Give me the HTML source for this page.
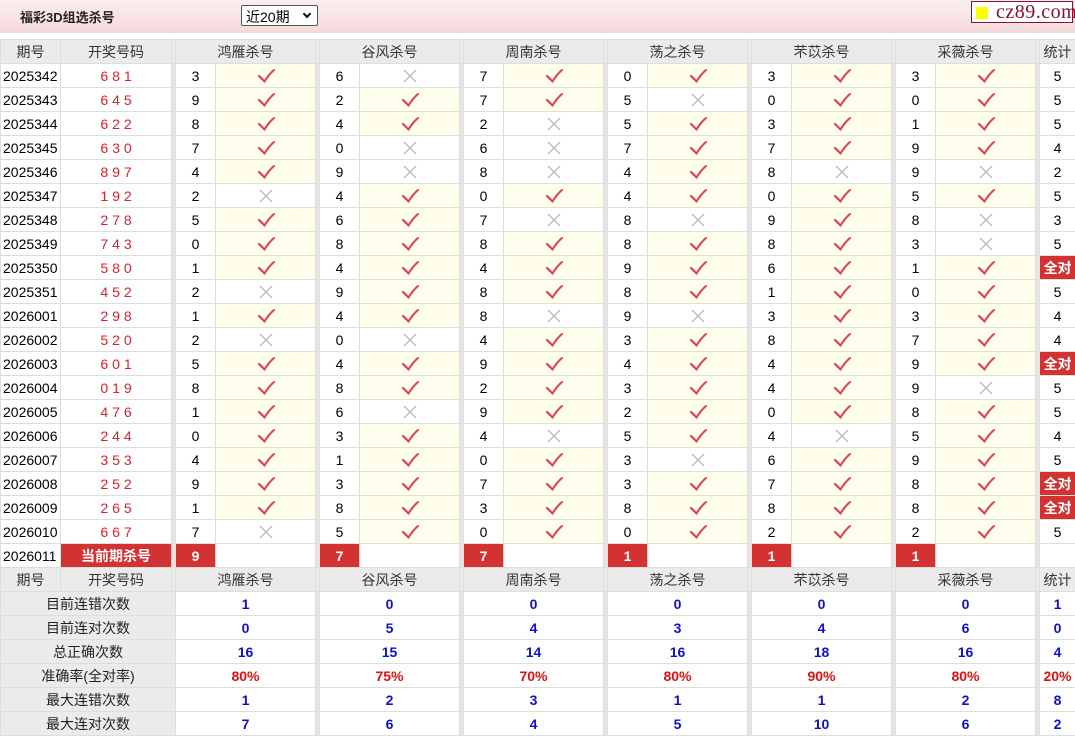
<!DOCTYPE html>
<html><head><meta charset="utf-8"><style>
*{margin:0;padding:0;box-sizing:border-box}
body{width:1075px;height:735px;overflow:hidden;background:#fff;font-family:"Liberation Sans","Noto Sans CJK SC",sans-serif;font-size:14px;color:#000}
.top{position:absolute;left:0;top:0;width:1075px;height:33px;background:linear-gradient(#fbeff0,#f5d9db)}
.title{position:absolute;left:20px;top:7px;font-weight:bold;font-size:13px;color:#222}
.sel{position:absolute;left:241px;top:5px;width:77px;height:21px;border:1px solid #555;border-radius:2px;background:#fff;font-size:14px;padding:1px 0 0 4px}
.sel b{position:absolute;right:7px;top:5px;width:6px;height:6px;border-right:2px solid #000;border-bottom:2px solid #000;transform:rotate(45deg)}
.logo{position:absolute;left:971px;top:1px;width:102px;height:22px;border:1px solid #8b1030;background:#fff;font-family:"Liberation Serif",serif;font-size:20px;color:#8b1030;line-height:20px;padding-left:24px;letter-spacing:0.5px}
.logo i{position:absolute;left:4px;top:5px;width:12px;height:12px;background:#ff0}
table{position:absolute;left:0;top:39px;border-collapse:collapse;table-layout:fixed;width:1075px}
tr{height:24px}
td{border:1px solid #ddd;height:24px;text-align:center;padding:0;white-space:nowrap;overflow:hidden;line-height:20px}
tr.h td{background:#ebebeb;color:#333}
td.s{background:#e6e6e6;border-color:#e0e0e0}
td.p{text-align:left;padding-left:2px}
td.d{color:#e02030;letter-spacing:4px;padding-left:4px}
td.y{background:#fffdec}
td.r{background:#d23232;color:#fff;font-weight:bold}
td.l{background:#ebebeb;color:#222}
td.v{color:#1010cc;font-weight:bold}
td.w{color:#e01010;font-weight:bold}
svg.k{width:20px;height:16px;display:block;margin:0 auto}
</style></head><body>
<svg width="0" height="0" style="position:absolute"><defs>
<g id="c"><path d="M3 8 L8.5 13.5 Q13 6 18 2" fill="none" stroke="#e8384f" stroke-width="2" stroke-linecap="round" stroke-linejoin="round"/></g>
<g id="x"><path d="M4 2 L16 14 M16 2 L4 14" fill="none" stroke="#bbb" stroke-width="1.4"/></g>
</defs></svg>
<div class="top"><div class="title">福彩3D组选杀号</div><div class="sel">近20期<b></b></div><div class="logo"><i></i>cz89.com</div></div>
<table>
<colgroup><col style="width:60px"><col style="width:111px"><col style="width:4px"><col style="width:40px"><col style="width:100px"><col style="width:4px"><col style="width:40px"><col style="width:100px"><col style="width:4px"><col style="width:40px"><col style="width:100px"><col style="width:4px"><col style="width:40px"><col style="width:100px"><col style="width:4px"><col style="width:40px"><col style="width:100px"><col style="width:4px"><col style="width:40px"><col style="width:100px"><col style="width:4px"><col style="width:36px"></colgroup>
<tr class="h"><td>期号</td><td>开奖号码</td><td class="s"></td><td colspan="2">鸿雁杀号</td><td class="s"></td><td colspan="2">谷风杀号</td><td class="s"></td><td colspan="2">周南杀号</td><td class="s"></td><td colspan="2">荡之杀号</td><td class="s"></td><td colspan="2">芣苡杀号</td><td class="s"></td><td colspan="2">采薇杀号</td><td class="s"></td><td>统计</td></tr>
<tr><td class="p">2025342</td><td class="d">681</td><td class="s"></td><td>3</td><td class="y"><svg class="k"><use href="#c"/></svg></td><td class="s"></td><td>6</td><td><svg class="k"><use href="#x"/></svg></td><td class="s"></td><td>7</td><td class="y"><svg class="k"><use href="#c"/></svg></td><td class="s"></td><td>0</td><td class="y"><svg class="k"><use href="#c"/></svg></td><td class="s"></td><td>3</td><td class="y"><svg class="k"><use href="#c"/></svg></td><td class="s"></td><td>3</td><td class="y"><svg class="k"><use href="#c"/></svg></td><td class="s"></td><td>5</td></tr>
<tr><td class="p">2025343</td><td class="d">645</td><td class="s"></td><td>9</td><td class="y"><svg class="k"><use href="#c"/></svg></td><td class="s"></td><td>2</td><td class="y"><svg class="k"><use href="#c"/></svg></td><td class="s"></td><td>7</td><td class="y"><svg class="k"><use href="#c"/></svg></td><td class="s"></td><td>5</td><td><svg class="k"><use href="#x"/></svg></td><td class="s"></td><td>0</td><td class="y"><svg class="k"><use href="#c"/></svg></td><td class="s"></td><td>0</td><td class="y"><svg class="k"><use href="#c"/></svg></td><td class="s"></td><td>5</td></tr>
<tr><td class="p">2025344</td><td class="d">622</td><td class="s"></td><td>8</td><td class="y"><svg class="k"><use href="#c"/></svg></td><td class="s"></td><td>4</td><td class="y"><svg class="k"><use href="#c"/></svg></td><td class="s"></td><td>2</td><td><svg class="k"><use href="#x"/></svg></td><td class="s"></td><td>5</td><td class="y"><svg class="k"><use href="#c"/></svg></td><td class="s"></td><td>3</td><td class="y"><svg class="k"><use href="#c"/></svg></td><td class="s"></td><td>1</td><td class="y"><svg class="k"><use href="#c"/></svg></td><td class="s"></td><td>5</td></tr>
<tr><td class="p">2025345</td><td class="d">630</td><td class="s"></td><td>7</td><td class="y"><svg class="k"><use href="#c"/></svg></td><td class="s"></td><td>0</td><td><svg class="k"><use href="#x"/></svg></td><td class="s"></td><td>6</td><td><svg class="k"><use href="#x"/></svg></td><td class="s"></td><td>7</td><td class="y"><svg class="k"><use href="#c"/></svg></td><td class="s"></td><td>7</td><td class="y"><svg class="k"><use href="#c"/></svg></td><td class="s"></td><td>9</td><td class="y"><svg class="k"><use href="#c"/></svg></td><td class="s"></td><td>4</td></tr>
<tr><td class="p">2025346</td><td class="d">897</td><td class="s"></td><td>4</td><td class="y"><svg class="k"><use href="#c"/></svg></td><td class="s"></td><td>9</td><td><svg class="k"><use href="#x"/></svg></td><td class="s"></td><td>8</td><td><svg class="k"><use href="#x"/></svg></td><td class="s"></td><td>4</td><td class="y"><svg class="k"><use href="#c"/></svg></td><td class="s"></td><td>8</td><td><svg class="k"><use href="#x"/></svg></td><td class="s"></td><td>9</td><td><svg class="k"><use href="#x"/></svg></td><td class="s"></td><td>2</td></tr>
<tr><td class="p">2025347</td><td class="d">192</td><td class="s"></td><td>2</td><td><svg class="k"><use href="#x"/></svg></td><td class="s"></td><td>4</td><td class="y"><svg class="k"><use href="#c"/></svg></td><td class="s"></td><td>0</td><td class="y"><svg class="k"><use href="#c"/></svg></td><td class="s"></td><td>4</td><td class="y"><svg class="k"><use href="#c"/></svg></td><td class="s"></td><td>0</td><td class="y"><svg class="k"><use href="#c"/></svg></td><td class="s"></td><td>5</td><td class="y"><svg class="k"><use href="#c"/></svg></td><td class="s"></td><td>5</td></tr>
<tr><td class="p">2025348</td><td class="d">278</td><td class="s"></td><td>5</td><td class="y"><svg class="k"><use href="#c"/></svg></td><td class="s"></td><td>6</td><td class="y"><svg class="k"><use href="#c"/></svg></td><td class="s"></td><td>7</td><td><svg class="k"><use href="#x"/></svg></td><td class="s"></td><td>8</td><td><svg class="k"><use href="#x"/></svg></td><td class="s"></td><td>9</td><td class="y"><svg class="k"><use href="#c"/></svg></td><td class="s"></td><td>8</td><td><svg class="k"><use href="#x"/></svg></td><td class="s"></td><td>3</td></tr>
<tr><td class="p">2025349</td><td class="d">743</td><td class="s"></td><td>0</td><td class="y"><svg class="k"><use href="#c"/></svg></td><td class="s"></td><td>8</td><td class="y"><svg class="k"><use href="#c"/></svg></td><td class="s"></td><td>8</td><td class="y"><svg class="k"><use href="#c"/></svg></td><td class="s"></td><td>8</td><td class="y"><svg class="k"><use href="#c"/></svg></td><td class="s"></td><td>8</td><td class="y"><svg class="k"><use href="#c"/></svg></td><td class="s"></td><td>3</td><td><svg class="k"><use href="#x"/></svg></td><td class="s"></td><td>5</td></tr>
<tr><td class="p">2025350</td><td class="d">580</td><td class="s"></td><td>1</td><td class="y"><svg class="k"><use href="#c"/></svg></td><td class="s"></td><td>4</td><td class="y"><svg class="k"><use href="#c"/></svg></td><td class="s"></td><td>4</td><td class="y"><svg class="k"><use href="#c"/></svg></td><td class="s"></td><td>9</td><td class="y"><svg class="k"><use href="#c"/></svg></td><td class="s"></td><td>6</td><td class="y"><svg class="k"><use href="#c"/></svg></td><td class="s"></td><td>1</td><td class="y"><svg class="k"><use href="#c"/></svg></td><td class="s"></td><td class="r">全对</td></tr>
<tr><td class="p">2025351</td><td class="d">452</td><td class="s"></td><td>2</td><td><svg class="k"><use href="#x"/></svg></td><td class="s"></td><td>9</td><td class="y"><svg class="k"><use href="#c"/></svg></td><td class="s"></td><td>8</td><td class="y"><svg class="k"><use href="#c"/></svg></td><td class="s"></td><td>8</td><td class="y"><svg class="k"><use href="#c"/></svg></td><td class="s"></td><td>1</td><td class="y"><svg class="k"><use href="#c"/></svg></td><td class="s"></td><td>0</td><td class="y"><svg class="k"><use href="#c"/></svg></td><td class="s"></td><td>5</td></tr>
<tr><td class="p">2026001</td><td class="d">298</td><td class="s"></td><td>1</td><td class="y"><svg class="k"><use href="#c"/></svg></td><td class="s"></td><td>4</td><td class="y"><svg class="k"><use href="#c"/></svg></td><td class="s"></td><td>8</td><td><svg class="k"><use href="#x"/></svg></td><td class="s"></td><td>9</td><td><svg class="k"><use href="#x"/></svg></td><td class="s"></td><td>3</td><td class="y"><svg class="k"><use href="#c"/></svg></td><td class="s"></td><td>3</td><td class="y"><svg class="k"><use href="#c"/></svg></td><td class="s"></td><td>4</td></tr>
<tr><td class="p">2026002</td><td class="d">520</td><td class="s"></td><td>2</td><td><svg class="k"><use href="#x"/></svg></td><td class="s"></td><td>0</td><td><svg class="k"><use href="#x"/></svg></td><td class="s"></td><td>4</td><td class="y"><svg class="k"><use href="#c"/></svg></td><td class="s"></td><td>3</td><td class="y"><svg class="k"><use href="#c"/></svg></td><td class="s"></td><td>8</td><td class="y"><svg class="k"><use href="#c"/></svg></td><td class="s"></td><td>7</td><td class="y"><svg class="k"><use href="#c"/></svg></td><td class="s"></td><td>4</td></tr>
<tr><td class="p">2026003</td><td class="d">601</td><td class="s"></td><td>5</td><td class="y"><svg class="k"><use href="#c"/></svg></td><td class="s"></td><td>4</td><td class="y"><svg class="k"><use href="#c"/></svg></td><td class="s"></td><td>9</td><td class="y"><svg class="k"><use href="#c"/></svg></td><td class="s"></td><td>4</td><td class="y"><svg class="k"><use href="#c"/></svg></td><td class="s"></td><td>4</td><td class="y"><svg class="k"><use href="#c"/></svg></td><td class="s"></td><td>9</td><td class="y"><svg class="k"><use href="#c"/></svg></td><td class="s"></td><td class="r">全对</td></tr>
<tr><td class="p">2026004</td><td class="d">019</td><td class="s"></td><td>8</td><td class="y"><svg class="k"><use href="#c"/></svg></td><td class="s"></td><td>8</td><td class="y"><svg class="k"><use href="#c"/></svg></td><td class="s"></td><td>2</td><td class="y"><svg class="k"><use href="#c"/></svg></td><td class="s"></td><td>3</td><td class="y"><svg class="k"><use href="#c"/></svg></td><td class="s"></td><td>4</td><td class="y"><svg class="k"><use href="#c"/></svg></td><td class="s"></td><td>9</td><td><svg class="k"><use href="#x"/></svg></td><td class="s"></td><td>5</td></tr>
<tr><td class="p">2026005</td><td class="d">476</td><td class="s"></td><td>1</td><td class="y"><svg class="k"><use href="#c"/></svg></td><td class="s"></td><td>6</td><td><svg class="k"><use href="#x"/></svg></td><td class="s"></td><td>9</td><td class="y"><svg class="k"><use href="#c"/></svg></td><td class="s"></td><td>2</td><td class="y"><svg class="k"><use href="#c"/></svg></td><td class="s"></td><td>0</td><td class="y"><svg class="k"><use href="#c"/></svg></td><td class="s"></td><td>8</td><td class="y"><svg class="k"><use href="#c"/></svg></td><td class="s"></td><td>5</td></tr>
<tr><td class="p">2026006</td><td class="d">244</td><td class="s"></td><td>0</td><td class="y"><svg class="k"><use href="#c"/></svg></td><td class="s"></td><td>3</td><td class="y"><svg class="k"><use href="#c"/></svg></td><td class="s"></td><td>4</td><td><svg class="k"><use href="#x"/></svg></td><td class="s"></td><td>5</td><td class="y"><svg class="k"><use href="#c"/></svg></td><td class="s"></td><td>4</td><td><svg class="k"><use href="#x"/></svg></td><td class="s"></td><td>5</td><td class="y"><svg class="k"><use href="#c"/></svg></td><td class="s"></td><td>4</td></tr>
<tr><td class="p">2026007</td><td class="d">353</td><td class="s"></td><td>4</td><td class="y"><svg class="k"><use href="#c"/></svg></td><td class="s"></td><td>1</td><td class="y"><svg class="k"><use href="#c"/></svg></td><td class="s"></td><td>0</td><td class="y"><svg class="k"><use href="#c"/></svg></td><td class="s"></td><td>3</td><td><svg class="k"><use href="#x"/></svg></td><td class="s"></td><td>6</td><td class="y"><svg class="k"><use href="#c"/></svg></td><td class="s"></td><td>9</td><td class="y"><svg class="k"><use href="#c"/></svg></td><td class="s"></td><td>5</td></tr>
<tr><td class="p">2026008</td><td class="d">252</td><td class="s"></td><td>9</td><td class="y"><svg class="k"><use href="#c"/></svg></td><td class="s"></td><td>3</td><td class="y"><svg class="k"><use href="#c"/></svg></td><td class="s"></td><td>7</td><td class="y"><svg class="k"><use href="#c"/></svg></td><td class="s"></td><td>3</td><td class="y"><svg class="k"><use href="#c"/></svg></td><td class="s"></td><td>7</td><td class="y"><svg class="k"><use href="#c"/></svg></td><td class="s"></td><td>8</td><td class="y"><svg class="k"><use href="#c"/></svg></td><td class="s"></td><td class="r">全对</td></tr>
<tr><td class="p">2026009</td><td class="d">265</td><td class="s"></td><td>1</td><td class="y"><svg class="k"><use href="#c"/></svg></td><td class="s"></td><td>8</td><td class="y"><svg class="k"><use href="#c"/></svg></td><td class="s"></td><td>3</td><td class="y"><svg class="k"><use href="#c"/></svg></td><td class="s"></td><td>8</td><td class="y"><svg class="k"><use href="#c"/></svg></td><td class="s"></td><td>8</td><td class="y"><svg class="k"><use href="#c"/></svg></td><td class="s"></td><td>8</td><td class="y"><svg class="k"><use href="#c"/></svg></td><td class="s"></td><td class="r">全对</td></tr>
<tr><td class="p">2026010</td><td class="d">667</td><td class="s"></td><td>7</td><td><svg class="k"><use href="#x"/></svg></td><td class="s"></td><td>5</td><td class="y"><svg class="k"><use href="#c"/></svg></td><td class="s"></td><td>0</td><td class="y"><svg class="k"><use href="#c"/></svg></td><td class="s"></td><td>0</td><td class="y"><svg class="k"><use href="#c"/></svg></td><td class="s"></td><td>2</td><td class="y"><svg class="k"><use href="#c"/></svg></td><td class="s"></td><td>2</td><td class="y"><svg class="k"><use href="#c"/></svg></td><td class="s"></td><td>5</td></tr>
<tr><td class="p">2026011</td><td class="r">当前期杀号</td><td class="s"></td><td class="r">9</td><td></td><td class="s"></td><td class="r">7</td><td></td><td class="s"></td><td class="r">7</td><td></td><td class="s"></td><td class="r">1</td><td></td><td class="s"></td><td class="r">1</td><td></td><td class="s"></td><td class="r">1</td><td></td><td class="s"></td><td></td></tr>
<tr class="h"><td>期号</td><td>开奖号码</td><td class="s"></td><td colspan="2">鸿雁杀号</td><td class="s"></td><td colspan="2">谷风杀号</td><td class="s"></td><td colspan="2">周南杀号</td><td class="s"></td><td colspan="2">荡之杀号</td><td class="s"></td><td colspan="2">芣苡杀号</td><td class="s"></td><td colspan="2">采薇杀号</td><td class="s"></td><td>统计</td></tr>
<tr><td class="l" colspan="3">目前连错次数</td><td class="v" colspan="2">1</td><td class="s"></td><td class="v" colspan="2">0</td><td class="s"></td><td class="v" colspan="2">0</td><td class="s"></td><td class="v" colspan="2">0</td><td class="s"></td><td class="v" colspan="2">0</td><td class="s"></td><td class="v" colspan="2">0</td><td class="s"></td><td class="v">1</td></tr>
<tr><td class="l" colspan="3">目前连对次数</td><td class="v" colspan="2">0</td><td class="s"></td><td class="v" colspan="2">5</td><td class="s"></td><td class="v" colspan="2">4</td><td class="s"></td><td class="v" colspan="2">3</td><td class="s"></td><td class="v" colspan="2">4</td><td class="s"></td><td class="v" colspan="2">6</td><td class="s"></td><td class="v">0</td></tr>
<tr><td class="l" colspan="3">总正确次数</td><td class="v" colspan="2">16</td><td class="s"></td><td class="v" colspan="2">15</td><td class="s"></td><td class="v" colspan="2">14</td><td class="s"></td><td class="v" colspan="2">16</td><td class="s"></td><td class="v" colspan="2">18</td><td class="s"></td><td class="v" colspan="2">16</td><td class="s"></td><td class="v">4</td></tr>
<tr><td class="l" colspan="3">准确率(全对率)</td><td class="w" colspan="2">80%</td><td class="s"></td><td class="w" colspan="2">75%</td><td class="s"></td><td class="w" colspan="2">70%</td><td class="s"></td><td class="w" colspan="2">80%</td><td class="s"></td><td class="w" colspan="2">90%</td><td class="s"></td><td class="w" colspan="2">80%</td><td class="s"></td><td class="w">20%</td></tr>
<tr><td class="l" colspan="3">最大连错次数</td><td class="v" colspan="2">1</td><td class="s"></td><td class="v" colspan="2">2</td><td class="s"></td><td class="v" colspan="2">3</td><td class="s"></td><td class="v" colspan="2">1</td><td class="s"></td><td class="v" colspan="2">1</td><td class="s"></td><td class="v" colspan="2">2</td><td class="s"></td><td class="v">8</td></tr>
<tr><td class="l" colspan="3">最大连对次数</td><td class="v" colspan="2">7</td><td class="s"></td><td class="v" colspan="2">6</td><td class="s"></td><td class="v" colspan="2">4</td><td class="s"></td><td class="v" colspan="2">5</td><td class="s"></td><td class="v" colspan="2">10</td><td class="s"></td><td class="v" colspan="2">6</td><td class="s"></td><td class="v">2</td></tr>
</table>
</body></html>
